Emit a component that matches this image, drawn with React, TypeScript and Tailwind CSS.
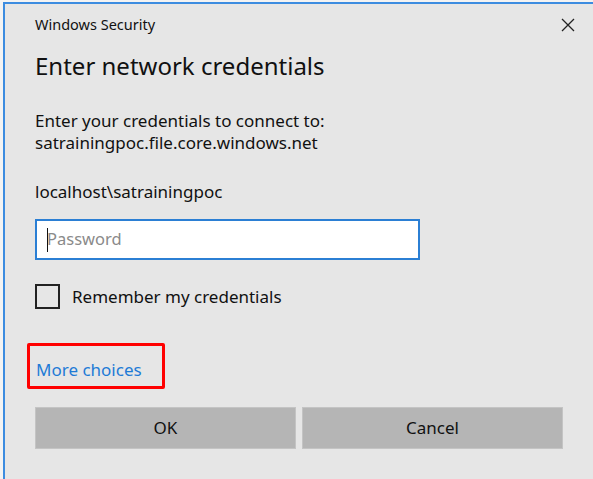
import React from "react";

export default function App() {
  return (
    <div
      className="w-[593px] h-[479px] bg-[#f3f3f3] overflow-hidden"
      style={{ fontFamily: '"Noto Sans", "Open Sans", sans-serif' }}
    >
      <div className="ml-[3px] mt-[2px] h-[477px] border-t-2 border-l-2 border-[#3c8ce0] bg-[#e6e6e6] text-[#111] relative">
        <div className="flex items-start justify-between pl-[30px] pr-[18px] pt-[10px]">
          <div className="text-[14.5px] leading-[20px]">Windows Security</div>
          <svg width="14" height="14" viewBox="0 0 14 14" className="mt-[4px]">
            <path d="M1 1 L13 13 M13 1 L1 13" stroke="#222" strokeWidth="1.3" />
          </svg>
        </div>
        <div className="pl-[30px] mt-[17px] text-[24px] leading-[30px]">Enter network credentials</div>
        <div className="pl-[30px] mt-[29px] text-[17px] leading-[22px]">
          <div>Enter your credentials to connect to:</div>
          <div>satrainingpoc.file.core.windows.net</div>
        </div>
        <div className="pl-[30px] mt-[27px] text-[17px] leading-[22px]">localhost\satrainingpoc</div>
        <div className="pl-[30px] mt-[16px]">
          <div className="w-[385px] h-[41px] border-2 border-[#2b7fd4] bg-white flex items-center pl-[10px] text-[16.5px] text-[#8a8a8a]">
            <span className="w-px h-[24px] bg-[#111]" />
            <span className="-ml-px">Password</span>
          </div>
        </div>
        <div className="pl-[30px] mt-[24px] flex items-center gap-[12px]">
          <div className="w-[25px] h-[25px] border-2 border-[#222]" />
          <div className="text-[17px] leading-[22px]">Remember my credentials</div>
        </div>
        <div className="pl-[22px] mt-[34px]">
          <div className="w-[138px] h-[46px] border-[3px] border-[#ff0000] rounded-[2px] flex items-center pl-[6px] pt-[7px]">
            <span className="text-[17px] text-[#1e7bd6]">More choices</span>
          </div>
        </div>
        <div className="pl-[30px] mt-[18px] flex gap-[6px]">
          <div className="w-[261px] h-[42px] bg-[#b5b5b5] border border-[#c4c4c4] flex items-center justify-center text-[17px]">OK</div>
          <div className="w-[261px] h-[42px] bg-[#b5b5b5] border border-[#c4c4c4] flex items-center justify-center text-[17px]">Cancel</div>
        </div>
      </div>
    </div>
  );
}
